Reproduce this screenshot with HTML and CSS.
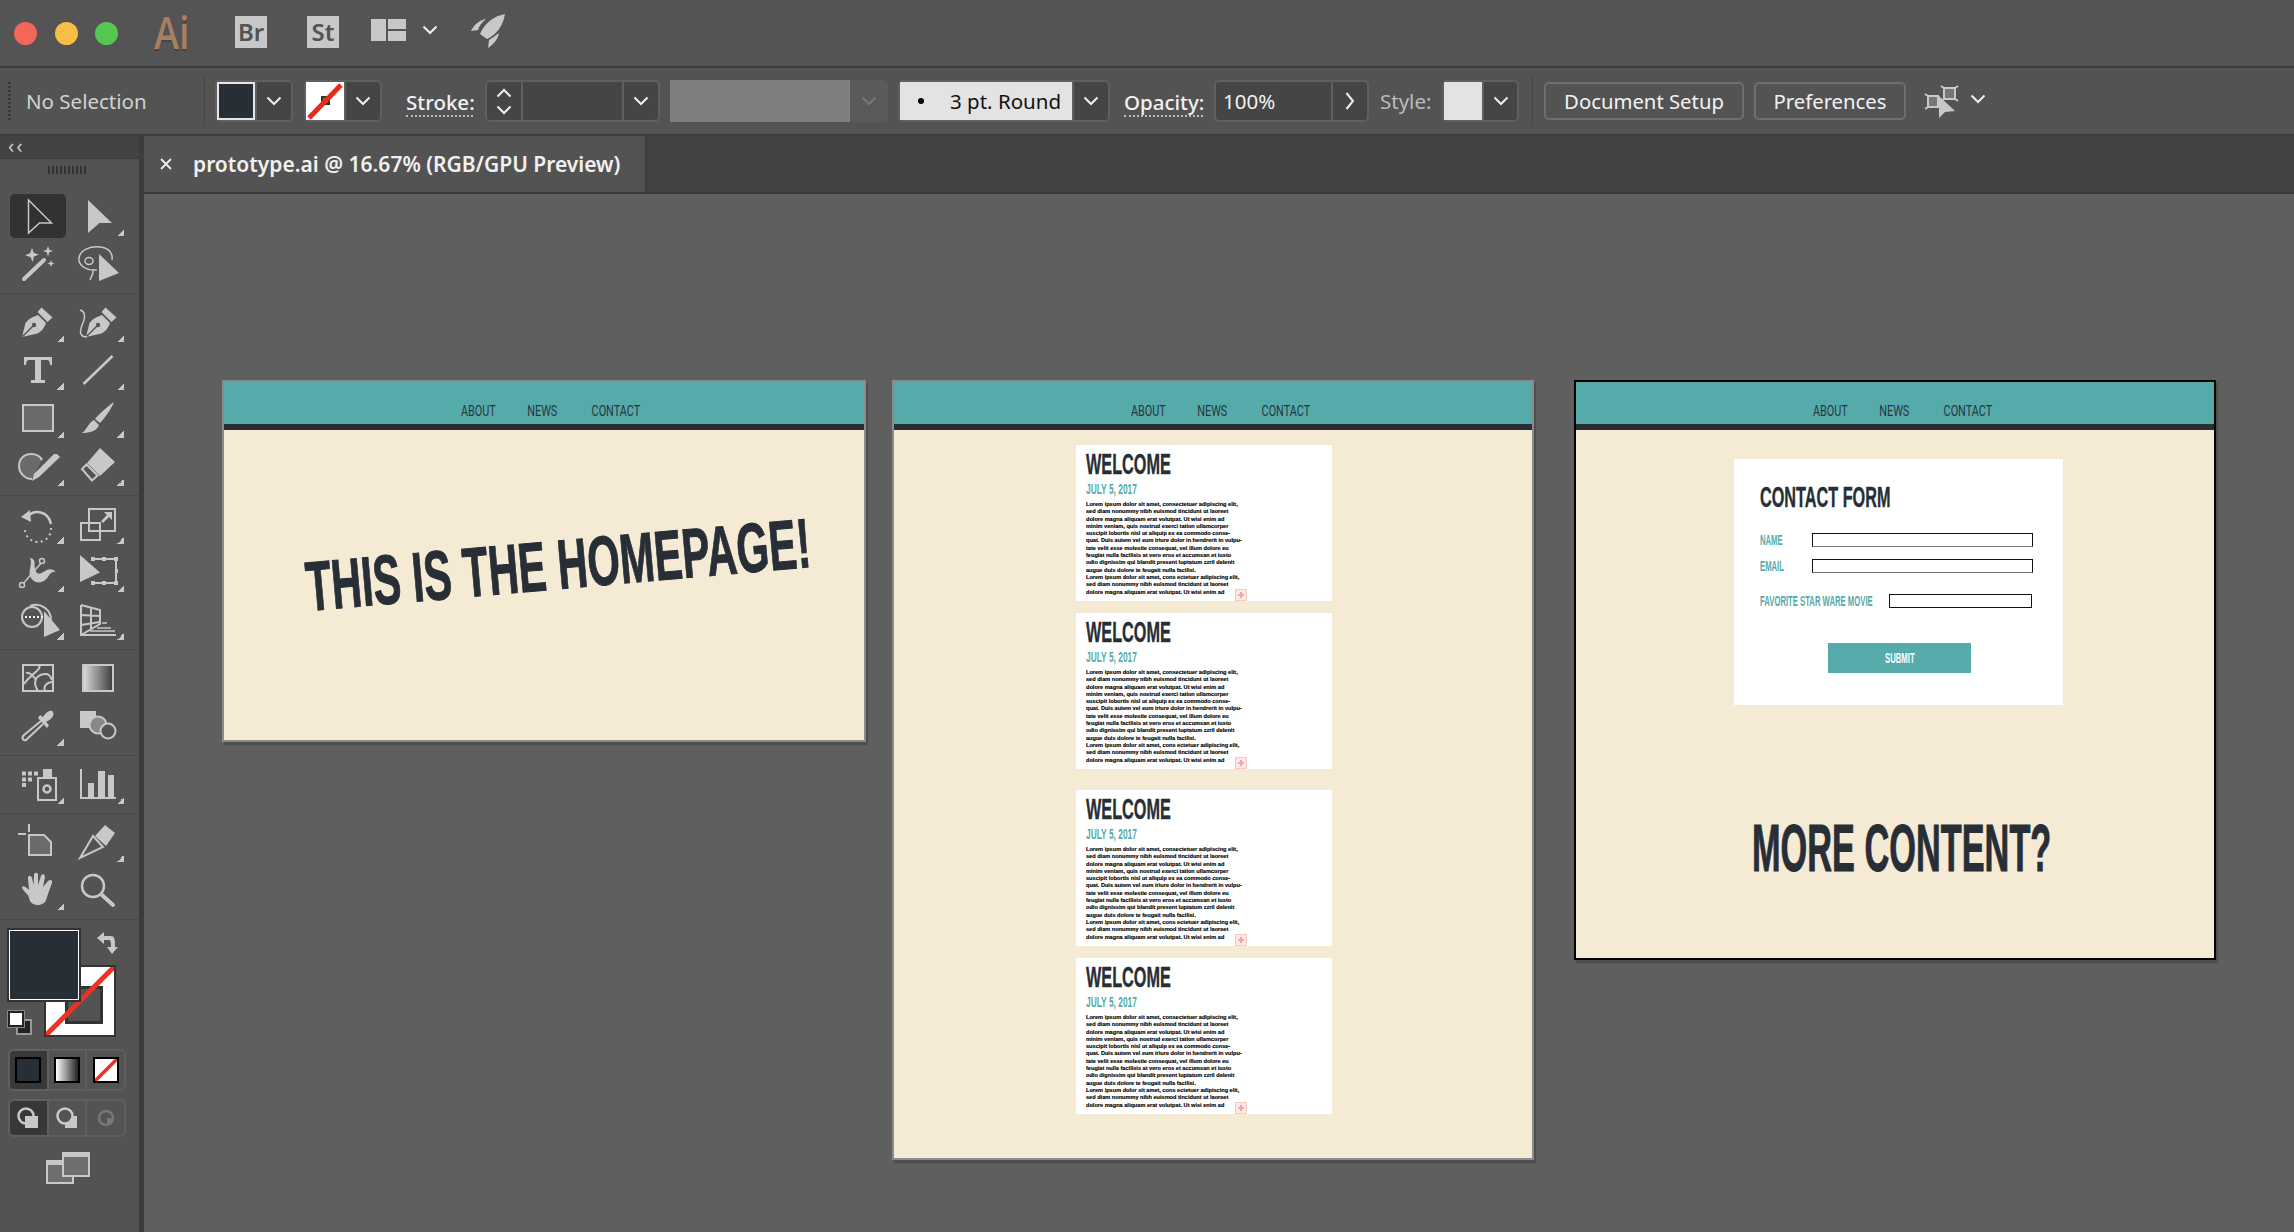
FILE: index.html
```html
<!DOCTYPE html>
<html lang="en">
<head>
    <meta charset="UTF-8">
    <title>prototype.ai @ 16.67% (RGB/GPU Preview)</title>
    <link rel="stylesheet" href="styles.css">
</head>
<body>
    <svg class="sprite" width="0" height="0">
        <symbol id="chev" viewBox="0 0 16 10"><path d="M1.500 1.500 8 8l6.500-6.500" fill="none" stroke="currentColor" stroke-width="2"/></symbol>
        <symbol id="pen" viewBox="0 0 40 40">
            <path d="M4 35 7.500 21C10 17.500 15 14.500 20 13L28 21C26.500 25.500 23 30 19.500 31.500Z"/>
            <path d="M23.500 5.500 34.500 15.500 29.500 20 19.500 10Z"/>
            <path d="M4.500 34.500 15 24" stroke="#535353" stroke-width="1.500"/>
            <circle cx="16" cy="23" r="2.200" fill="#535353"/>
        </symbol>
    </svg>

    <header class="titlebar">
        <span class="light red"></span>
        <span class="light yellow"></span>
        <span class="light green"></span>
        <span class="app-logo">Ai</span>
        <span class="app-tile tile-br">Br</span>
        <span class="app-tile tile-st">St</span>
        <svg class="layout-icon" width="35" height="22" viewBox="0 0 35 22"><path d="M0 0h15v22H0zM17 0h18v10H17zM17 12h18v10H17z" fill="#c8c8c8"/></svg>
        <svg class="chev layout-chev"><use href="#chev"/></svg>
        <svg class="rocket" width="34" height="34" viewBox="0 0 34 34" fill="#c8c8c8">
            <path d="M34 0C24 2 14 8 9 20L16 25C26 20 32 12 34 0Z"/>
            <path d="M15 5C8 6 3 11 0 17L7 16C8 12 11 8 15 5Z"/>
            <path d="M28 19C24 22 21 24 18 26L17 34C23 30 27 25 28 19Z"/>
        </svg>
    </header>

    <div class="controlbar">
        <span class="gripper"></span>
        <span class="ctl-label no-sel">No Selection</span>
        <span class="vdiv div-fill"></span>
        <div class="widget w-fill">
            <span class="swatch swatch-dark"></span>
            <span class="drop"><svg class="chev"><use href="#chev"/></svg></span>
        </div>
        <div class="widget w-stroke">
            <span class="swatch swatch-none">
                <svg width="38" height="38" viewBox="0 0 38 38"><rect x="15" y="14" width="9" height="9" fill="#333"/><rect x="17.500" y="16.500" width="4" height="4" fill="#fff"/><path d="M3 36 35 3" stroke="#e8291c" stroke-width="5"/></svg>
            </span>
            <span class="drop"><svg class="chev"><use href="#chev"/></svg></span>
        </div>
        <span class="ctl-label link stroke-label">Stroke:</span>
        <div class="widget w-weight">
            <span class="stepper">
                <svg class="chev flip"><use href="#chev"/></svg>
                <svg class="chev"><use href="#chev"/></svg>
            </span>
            <span class="well well-weight"></span>
            <span class="drop"><svg class="chev"><use href="#chev"/></svg></span>
        </div>
        <span class="var-field"></span>
        <span class="var-drop"><svg class="chev"><use href="#chev"/></svg></span>
        <div class="widget w-brush">
            <span class="brush-value"><span class="brush-dot"></span>3 pt. Round</span>
            <span class="drop"><svg class="chev"><use href="#chev"/></svg></span>
        </div>
        <span class="ctl-label link opacity-label">Opacity:</span>
        <div class="widget w-opacity">
            <span class="well well-opacity">100%</span>
            <span class="drop"><svg class="chev-right" width="10" height="20" viewBox="0 0 10 20"><path d="M1.500 2 8 10l-6.500 8" fill="none" stroke="#eee" stroke-width="2"/></svg></span>
        </div>
        <span class="ctl-label dim style-label">Style:</span>
        <div class="widget w-style">
            <span class="swatch swatch-light"></span>
            <span class="drop"><svg class="chev"><use href="#chev"/></svg></span>
        </div>
        <span class="vdiv div-buttons"></span>
        <button class="ctl-btn btn-doc">Document Setup</button>
        <button class="ctl-btn btn-prefs">Preferences</button>
        <svg class="arrange-icon" width="36" height="36" viewBox="0 0 36 36">
            <path d="M4 13h10v11H4z" fill="#777" stroke="#c8c8c8" stroke-width="2"/>
            <path d="M20 5h11v11H20z" fill="#777" stroke="#c8c8c8" stroke-width="2"/>
            <path d="M1 11 4 13M1 26 4 24M17 3 20 5M34 3 31 5M34 18 31 16M17 18 20 16" stroke="#c8c8c8" stroke-width="2"/>
            <path d="M15 13V35L21 29 31 28Z" fill="#c8c8c8"/>
        </svg>
        <svg class="chev arrange-chev"><use href="#chev"/></svg>
    </div>

    <div class="workspace">
        <aside class="toolpanel">
            <div class="panel-strip">&lsaquo;&lsaquo;</div>
            <div class="panel-grip"></div>

            <div class="tool-group">
                <div class="tool selected">
                    <svg class="ico" viewBox="0 0 40 40"><path class="line thin" d="M10.500 4V37L21.500 27H33.500Z"/></svg>
                </div>
                <div class="tool more">
                    <svg class="ico" viewBox="0 0 40 40"><path d="M10 4V37L21.500 27H34Z"/></svg>
                </div>
                <div class="tool">
                    <svg class="ico" viewBox="0 0 40 40">
                        <path class="line" style="stroke-width:4" stroke-linecap="round" d="M6 35 26 16"/>
                        <path d="M14 4l1.800 5 5.200 1.500-5 2-1.500 5.500-2-5-5.500-1.800 5-2zM30 2l1.300 3.700 3.700 1.300-3.700 1.300L30 12.500l-1.300-4.200L25 7l3.700-1.300zM33 16l.9 2.600 2.600.9-2.600.9-.9 2.600-.9-2.600-2.600-.9 2.600-.9z"/>
                    </svg>
                </div>
                <div class="tool">
                    <svg class="ico" viewBox="0 0 40 40">
                        <path class="line thin" d="M19 26C8 27 0 21 1 14 2 6 12 2 22 3 31 4 35 9 34 16M15 25C16 31 13 32 12 36M7 17a4 3.500 0 1 0 8 0 4 3.500 0 1 0-8 0"/>
                        <path d="M21 10V37L41 29Z"/>
                    </svg>
                </div>
            </div>

            <div class="tool-group">
                <div class="tool more"><svg class="ico" viewBox="0 0 40 40"><use href="#pen"/></svg></div>
                <div class="tool more">
                    <svg class="ico" viewBox="0 0 40 40">
                        <use href="#pen" x="4"/>
                        <path class="line thin" d="M2 8C7 9 7 14 6 18 4 24 1 28 3 32 4 35 7 35 9 35"/>
                    </svg>
                </div>
                <div class="tool more">
                    <svg class="ico" viewBox="0 0 40 40">
                        <path d="M6 7H34V15H32C32 12 31 10 29 10H23V30H27V33H13V30H17V10H11C9 10 8 12 8 15H6Z"/>
                    </svg>
                </div>
                <div class="tool more"><svg class="ico" viewBox="0 0 40 40"><path class="line" style="stroke-width:2.500" d="M5.500 34 34.500 6"/></svg></div>
                <div class="tool more"><svg class="ico" viewBox="0 0 40 40"><rect class="box" x="5" y="7" width="30" height="26"/></svg></div>
                <div class="tool more">
                    <svg class="ico" viewBox="0 0 40 40">
                        <path d="M36 4C34 10 26 21 22 25L17 21C21 16 31 7 36 4ZM16 22 21 27C19 33 12 35 4 35 8 33 10 25 16 22Z"/>
                    </svg>
                </div>
                <div class="tool more">
                    <svg class="ico" viewBox="0 0 40 40">
                        <path class="box" d="M14 33C7 33 1 27 1 20 1 13 6 8 13 8 18 8 22 10 24 14"/>
                        <path d="M39 8 42 11 21 31 14 35 16 28 36 8Z"/>
                    </svg>
                </div>
                <div class="tool more">
                    <svg class="ico" viewBox="0 0 40 40">
                        <path d="M22 2 37 16 22 30 9 17Z"/>
                        <path class="line" d="M8.500 18.500 4 23 14 34.500 19.500 29.500Z"/>
                    </svg>
                </div>
            </div>

            <div class="tool-group">
                <div class="tool more">
                    <svg class="ico" viewBox="0 0 40 40">
                        <path class="line" style="stroke-width:2.500" d="M10 12C16 6 30 6 33 20"/>
                        <path d="M3 13 12 6 13 18Z"/>
                        <path class="line" style="stroke-dasharray:2 3.500" d="M33 24A13 13 0 0 1 7 26"/>
                    </svg>
                </div>
                <div class="tool more">
                    <svg class="ico" viewBox="0 0 40 40">
                        <path class="line" d="M11 5H37V27H11ZM3 19H22V36H3Z"/>
                        <path d="M34 8V16L31 13 25 19 23 17 29 11 26 8Z"/>
                    </svg>
                </div>
                <div class="tool more">
                    <svg class="ico" viewBox="0 0 40 40">
                        <path d="M12 6C20 7 14 15 19 21 24 25 29 12 38 20 35 19 32 21 30 25 26 31 18 33 13 26 9 20 15 13 12 6Z"/>
                        <path class="line thin" d="M4 33 24 10"/>
                        <circle cx="4" cy="33" r="2.500" fill="#535353" stroke="#c8c8c8" stroke-width="1.500"/>
                        <circle cx="24" cy="9" r="2.500" fill="#535353" stroke="#c8c8c8" stroke-width="1.500"/>
                    </svg>
                </div>
                <div class="tool more">
                    <svg class="ico" viewBox="0 0 40 40">
                        <path d="M2 3V30L22 20.500Z"/>
                        <path class="line" d="M15 7H38V31H15"/>
                        <path d="M13 5h4v4h-4zM24 5h4v4h-4zM36 5h4v4h-4zM37 17h3v4h-3zM36 29h4v4h-4zM24 29h4v4h-4zM13 29h4v4h-4z"/>
                    </svg>
                </div>
                <div class="tool more">
                    <svg class="ico" viewBox="0 0 40 40">
                        <circle class="line" cx="14" cy="17" r="10"/>
                        <path class="line" d="M12 6C22 2 33 9 33 20"/>
                        <path class="line" style="stroke-dasharray:2 2;stroke:#eee" d="M7 17H26"/>
                        <path d="M26 11V37L42 30Z"/>
                    </svg>
                </div>
                <div class="tool more">
                    <svg class="ico" viewBox="0 0 40 40">
                        <path class="line" d="M3 5V35H38M3 5 22 10V24L3 35M3 15 22 16M3 25 22 22M13 8V29"/>
                        <path class="line thin" d="M24 23H29M19 28H33M12 31H37"/>
                    </svg>
                </div>
            </div>

            <div class="tool-group">
                <div class="tool">
                    <svg class="ico" viewBox="0 0 40 40">
                        <rect class="line" x="5" y="7" width="30" height="26"/>
                        <path class="line" d="M6 26C13 16 26 10 20 7M20 33C14 24 18 16 28 16 32 16 33 20 34 22M8 15C12 14 16 19 18 22M27 33C25 28 29 24 35 24"/>
                    </svg>
                </div>
                <div class="tool">
                    <svg class="ico" viewBox="0 0 40 40">
                        <defs><linearGradient id="grad"><stop offset="0" stop-color="#ddd"/><stop offset="1" stop-color="#3c3c3c"/></linearGradient></defs>
                        <rect x="5" y="7" width="30" height="26" fill="url(#grad)" stroke="#c8c8c8" stroke-width="2"/>
                    </svg>
                </div>
                <div class="tool more">
                    <svg class="ico" viewBox="0 0 40 40">
                        <path class="line" d="M23 15 6 29C3 32 5 35 8 34L25 18"/>
                        <path d="M20 12 29 22 31 19 28 16C33 14 37 9 35 6 33 3 28 6 25 11L22 9Z"/>
                    </svg>
                </div>
                <div class="tool">
                    <svg class="ico" viewBox="0 0 40 40">
                        <rect x="2" y="5" width="16" height="17"/>
                        <circle cx="20" cy="19" r="8.500" fill="#888" stroke="#c8c8c8" stroke-width="2"/>
                        <circle cx="30" cy="25" r="7.500" fill="#535353" stroke="#c8c8c8" stroke-width="2"/>
                    </svg>
                </div>
            </div>

            <div class="tool-group">
                <div class="tool more">
                    <svg class="ico" viewBox="0 0 40 40">
                        <path d="M4 7.500h4v4H4zM10 7.500h4v4h-4zM16 7.500h4v4h-4zM4 13.500h4v4H4zM10 13.500h4v4h-4zM4 19h4v4H4zM25 5h9v8h-9z"/>
                        <rect class="line" x="20" y="14" width="18" height="22"/>
                        <circle class="line" style="stroke-width:2.500" cx="29" cy="25" r="3.500"/>
                    </svg>
                </div>
                <div class="tool more">
                    <svg class="ico" viewBox="0 0 40 40">
                        <path class="line" d="M3 5V34H38"/>
                        <path d="M10 19h6v14h-6zM20 7h7v26h-7zM30 11h6v22h-6z"/>
                    </svg>
                </div>
            </div>

            <div class="tool-group">
                <div class="tool">
                    <svg class="ico" viewBox="0 0 40 40">
                        <path class="line" d="M0 12H8M11 2V10"/>
                        <path class="box" d="M11 13H26L33 20V33H11Z"/>
                    </svg>
                </div>
                <div class="tool more">
                    <svg class="ico" viewBox="0 0 40 40">
                        <path class="line" d="M2 36 15 14 25 25Z"/>
                        <path d="M27 3 37 11 28 24 17 14Z"/>
                    </svg>
                </div>
                <div class="tool more">
                    <svg class="ico" viewBox="0 0 40 40">
                        <path d="M10 25C7 22 4 19 4 17 5 15 8 17 11 20L10 8C10 5 13 5 14 8L15.500 15 16 5C16 2 20 2 20 5V15L23 6C24 3 27 4 27 7L25 17 30 11C32 9 35 10 34 13 32 18 30 24 28 30 26 36 15 37 12 31Z"/>
                    </svg>
                </div>
                <div class="tool">
                    <svg class="ico" viewBox="0 0 40 40">
                        <circle class="line" style="stroke-width:2.500" cx="15" cy="16" r="11"/>
                        <path class="line" style="stroke-width:4" stroke-linecap="round" d="M24 25 35 35"/>
                    </svg>
                </div>
            </div>

            <div class="fill-stroke">
                <span class="fs-fill"></span>
                <span class="fs-stroke">
                    <svg width="68" height="68" viewBox="0 0 68 68"><path d="M0 68 68 0" stroke="#ef3124" stroke-width="5"/></svg>
                </span>
                <svg class="fs-swap" width="22" height="24" viewBox="0 0 22 24" fill="#c8c8c8"><path d="M0 7 7 1V5H14C18 5 18 9 18 16H21L15 23 10 16H14C14 12 14 9 12 9H7V13Z"/></svg>
                <span class="fs-default"><span class="def-stroke"></span><span class="def-fill"></span></span>
            </div>

            <div class="mode-row color-row">
                <span class="mode on"><span class="mode-swatch sw-color"></span></span>
                <span class="mode"><span class="mode-swatch sw-grad"></span></span>
                <span class="mode">
                    <span class="mode-swatch sw-none"><svg width="22" height="22" viewBox="0 0 22 22"><path d="M0 22 22 0" stroke="#ef3124" stroke-width="3.500"/></svg></span>
                </span>
            </div>
            <div class="mode-row draw-row">
                <span class="mode on"><svg width="24" height="24" viewBox="0 0 24 24"><circle cx="10" cy="10" r="7.500" fill="none" stroke="#c8c8c8" stroke-width="2.500"/><rect x="9" y="10" width="13" height="12" fill="#c8c8c8"/></svg></span>
                <span class="mode"><svg width="24" height="24" viewBox="0 0 24 24"><circle cx="10" cy="10" r="7.500" fill="#535353" stroke="#c8c8c8" stroke-width="2.500"/><path d="M10 22H22V10H17C17 14 14 17 10 18Z" fill="#c8c8c8"/></svg></span>
                <span class="mode faded"><svg width="24" height="24" viewBox="0 0 24 24"><circle cx="12" cy="12" r="7" fill="none" stroke="#777" stroke-width="2.500"/><path d="M13 12H19V14C18 17 16 18 13 19Z" fill="#777"/></svg></span>
            </div>
            <svg class="screen-mode" width="44" height="32" viewBox="0 0 44 32">
                <rect x="1" y="9" width="26" height="22" fill="#6e6e6e" stroke="#c8c8c8" stroke-width="2"/>
                <path d="M0 8h28v5H0z" fill="#c8c8c8"/>
                <rect x="17" y="1" width="26" height="23" fill="#6e6e6e" stroke="#c8c8c8" stroke-width="2"/>
                <path d="M16 0h28v5H16z" fill="#c8c8c8"/>
            </svg>
        </aside>

        <main class="docarea">
            <div class="tabbar">
                <div class="doc-tab">
                    <svg class="tab-close" width="14" height="14" viewBox="0 0 14 14"><path d="M2 2 12 12M12 2 2 12" stroke="#eee" stroke-width="1.800"/></svg>
                    <span class="tab-title">prototype.ai @ 16.67% (RGB/GPU Preview)</span>
                </div>
            </div>
            <div class="canvas">
                <section class="artboard board-home">
                    <div class="site-head"><nav class="site-nav"><span>ABOUT</span><span>NEWS</span><span>CONTACT</span></nav></div>
                    <div class="home-body"><h1 class="home-title">THIS IS THE HOMEPAGE!</h1></div>
                </section>

                <section class="artboard board-news">
                    <div class="site-head"><nav class="site-nav"><span>ABOUT</span><span>NEWS</span><span>CONTACT</span></nav></div>
                    <div class="news-list">
                        <article class="card">
                            <h2 class="bebas card-title">WELCOME</h2>
                            <p class="bebas card-date">JULY 5, 2017</p>
                            <p class="card-text">Lorem ipsum dolor sit amet, consectetuer adipiscing elit,<br>sed diam nonummy nibh euismod tincidunt ut laoreet<br>dolore magna aliquam erat volutpat. Ut wisi enim ad<br>minim veniam, quis nostrud exerci tation ullamcorper<br>suscipit lobortis nisl ut aliquip ex ea commodo conse-<br>quat. Duis autem vel eum iriure dolor in hendrerit in vulpu-<br>tate velit esse molestie consequat, vel illum dolore eu<br>feugiat nulla facilisis at vero eros et accumsan et iusto<br>odio dignissim qui blandit present luptatum zzril delenit<br>augue duis dolore te feugait nulla facilisi.<br>Lorem ipsum dolor sit amet, cons ectetuer adipiscing elit,<br>sed diam nonummy nibh euismod tincidunt ut laoreet<br>dolore magna aliquam erat volutpat. Ut wisi enim ad</p>
                            <span class="overset"></span>
                        </article>
                        <article class="card">
                            <h2 class="bebas card-title">WELCOME</h2>
                            <p class="bebas card-date">JULY 5, 2017</p>
                            <p class="card-text">Lorem ipsum dolor sit amet, consectetuer adipiscing elit,<br>sed diam nonummy nibh euismod tincidunt ut laoreet<br>dolore magna aliquam erat volutpat. Ut wisi enim ad<br>minim veniam, quis nostrud exerci tation ullamcorper<br>suscipit lobortis nisl ut aliquip ex ea commodo conse-<br>quat. Duis autem vel eum iriure dolor in hendrerit in vulpu-<br>tate velit esse molestie consequat, vel illum dolore eu<br>feugiat nulla facilisis at vero eros et accumsan et iusto<br>odio dignissim qui blandit present luptatum zzril delenit<br>augue duis dolore te feugait nulla facilisi.<br>Lorem ipsum dolor sit amet, cons ectetuer adipiscing elit,<br>sed diam nonummy nibh euismod tincidunt ut laoreet<br>dolore magna aliquam erat volutpat. Ut wisi enim ad</p>
                            <span class="overset"></span>
                        </article>
                        <article class="card card-apart">
                            <h2 class="bebas card-title">WELCOME</h2>
                            <p class="bebas card-date">JULY 5, 2017</p>
                            <p class="card-text">Lorem ipsum dolor sit amet, consectetuer adipiscing elit,<br>sed diam nonummy nibh euismod tincidunt ut laoreet<br>dolore magna aliquam erat volutpat. Ut wisi enim ad<br>minim veniam, quis nostrud exerci tation ullamcorper<br>suscipit lobortis nisl ut aliquip ex ea commodo conse-<br>quat. Duis autem vel eum iriure dolor in hendrerit in vulpu-<br>tate velit esse molestie consequat, vel illum dolore eu<br>feugiat nulla facilisis at vero eros et accumsan et iusto<br>odio dignissim qui blandit present luptatum zzril delenit<br>augue duis dolore te feugait nulla facilisi.<br>Lorem ipsum dolor sit amet, cons ectetuer adipiscing elit,<br>sed diam nonummy nibh euismod tincidunt ut laoreet<br>dolore magna aliquam erat volutpat. Ut wisi enim ad</p>
                            <span class="overset"></span>
                        </article>
                        <article class="card">
                            <h2 class="bebas card-title">WELCOME</h2>
                            <p class="bebas card-date">JULY 5, 2017</p>
                            <p class="card-text">Lorem ipsum dolor sit amet, consectetuer adipiscing elit,<br>sed diam nonummy nibh euismod tincidunt ut laoreet<br>dolore magna aliquam erat volutpat. Ut wisi enim ad<br>minim veniam, quis nostrud exerci tation ullamcorper<br>suscipit lobortis nisl ut aliquip ex ea commodo conse-<br>quat. Duis autem vel eum iriure dolor in hendrerit in vulpu-<br>tate velit esse molestie consequat, vel illum dolore eu<br>feugiat nulla facilisis at vero eros et accumsan et iusto<br>odio dignissim qui blandit present luptatum zzril delenit<br>augue duis dolore te feugait nulla facilisi.<br>Lorem ipsum dolor sit amet, cons ectetuer adipiscing elit,<br>sed diam nonummy nibh euismod tincidunt ut laoreet<br>dolore magna aliquam erat volutpat. Ut wisi enim ad</p>
                            <span class="overset"></span>
                        </article>
                    </div>
                </section>

                <section class="artboard board-contact">
                    <div class="site-head"><nav class="site-nav"><span>ABOUT</span><span>NEWS</span><span>CONTACT</span></nav></div>
                    <form class="contact-card">
                        <h2 class="bebas card-title">CONTACT FORM</h2>
                        <div class="field field-name"><label class="bebas field-label">NAME</label><span class="field-box"></span></div>
                        <div class="field field-email"><label class="bebas field-label">EMAIL</label><span class="field-box"></span></div>
                        <div class="field field-movie"><label class="bebas field-label">FAVORITE STAR WARE MOVIE</label><span class="field-box box-short"></span></div>
                        <div class="submit-btn"><span class="bebas submit-text">SUBMIT</span></div>
                    </form>
                    <h2 class="bebas more-title">MORE CONTENT?</h2>
                </section>
            </div>
        </main>
    </div>
</body>
</html>
```

FILE: styles.css
```css
* {
    box-sizing: border-box;
}

html, body {
    margin: 0;
    padding: 0;
}

body {
    width: 2294px;
    height: 1232px;
    overflow: hidden;
    background-color: #535353;
    font-family: "Noto Sans", Arial, sans-serif;
    font-size: 20px;
    color: #e6e6e6;
    display: flex;
    flex-direction: column;
}

.sprite {
    position: absolute;
}

.chev {
    width: 16px;
    height: 10px;
    color: #eee;
    display: block;
    flex: none;
}

.flip {
    transform: scaleY(-1);
}

/* title bar */
.titlebar {
    height: 68px;
    flex: none;
    border-bottom: 2px solid #3c3c3c;
    background-color: #545454;
    display: flex;
    align-items: center;
    padding-left: 14px;
}

.light {
    width: 23px;
    height: 23px;
    border-radius: 50%;
    margin-right: 17.5px;
    flex: none;
}

.red { background-color: #f2665c; }
.yellow { background-color: #f8bd45; }
.green { background-color: #55c64f; }

.app-logo {
    font-family: "Open Sans", sans-serif;
    font-size: 46px;
    font-weight: 600;
    line-height: 46px;
    color: #a87f62;
    width: 48px;
    margin-left: 18.5px;
    margin-top: -4px;
    transform: scaleX(.82);
    transform-origin: left center;
    text-shadow: 0 2px 0 #444;
}

.app-tile {
    width: 32px;
    height: 32px;
    margin-top: -2px;
    background-color: #c8c8c8;
    color: #535353;
    font-size: 24px;
    font-weight: 600;
    line-height: 32px;
    text-align: center;
    flex: none;
}

.tile-br { margin-left: 33px; }
.tile-st { margin-left: 40px; }
.layout-icon { margin-left: 32px; margin-top: -6px; }
.layout-chev { margin-left: 16px; margin-top: -6px; }
.rocket { margin-left: 33px; margin-top: -4px; }

/* control bar */
.controlbar {
    height: 68px;
    flex: none;
    border-bottom: 2px solid #3c3c3c;
    display: flex;
    align-items: center;
    padding-left: 8px;
    background-color: #535353;
}

.gripper {
    width: 3px;
    height: 38px;
    flex: none;
    background-image: linear-gradient(#3a3a3a 50%, transparent 50%);
    background-size: 3px 4px;
}

.ctl-label {
    flex: none;
    white-space: nowrap;
    font-size: 20.5px;
}

.no-sel { margin-left: 15px; width: 178px; color: #d2d2d2; }
.link {
    color: #f2f2f2;
    font-weight: 500;
    line-height: 26px;
    border-bottom: 2px dotted #bbb;
    margin-top: 3px;
}
.dim { color: #bbb; }
.stroke-label { margin-left: 24px; width: 67px; }
.opacity-label { margin-left: 14px; width: 79px; }
.style-label { margin-left: 11px; width: 51px; }

.vdiv {
    width: 1px;
    height: 50px;
    background-color: #474747;
    flex: none;
}

.div-fill { margin-right: 10px; }
.div-buttons { margin-left: 13px; margin-right: 11px; }

.widget {
    height: 42px;
    flex: none;
    display: flex;
    align-items: stretch;
    border: 2px solid #5f5f5f;
    border-radius: 5px;
    background-color: #454545;
}

.drop {
    width: 36px;
    flex: none;
    display: flex;
    align-items: center;
    justify-content: center;
    border-left: 2px solid #5f5f5f;
}

.swatch {
    width: 38px;
    flex: none;
    display: block;
}

.w-fill { width: 78px; }
.w-stroke { width: 78px; margin-left: 11px; }
.w-weight { width: 175px; margin-left: 12px; }
.w-brush { width: 212px; margin-left: 10px; }
.w-opacity { width: 155px; margin-left: 11px; }
.w-style { width: 77px; margin-left: 11px; }

.swatch-dark { background-color: #272e36; border: 2px solid #e6e6e6; }
.swatch-none { background-color: #fff; }
.swatch-none svg { display: block; }
.swatch-light { background-color: #e3e3e3; }

.stepper {
    width: 34px;
    flex: none;
    display: flex;
    flex-direction: column;
    justify-content: space-around;
    align-items: center;
    padding: 2px 0;
}

.well { display: block; flex: 1; }
.well-weight { border-left: 2px solid #5f5f5f; }
.well-opacity { padding-left: 7px; color: #f2f2f2; font-size: 20.5px; line-height: 38px; }

.var-field {
    width: 180px;
    height: 42px;
    margin-left: 10px;
    background-color: #7f7f7f;
    flex: none;
}

.var-drop {
    width: 38px;
    height: 42px;
    flex: none;
    background-color: #5a5a5a;
    display: flex;
    align-items: center;
    justify-content: center;
    border-radius: 0 5px 5px 0;
}

.var-drop .chev { color: #777; }

.brush-value {
    width: 172px;
    flex: none;
    background-color: #e3e3e3;
    color: #111;
    font-size: 20.5px;
    line-height: 38px;
    white-space: nowrap;
    display: flex;
    align-items: center;
    padding-left: 18px;
}

.brush-dot {
    width: 6px;
    height: 6px;
    border-radius: 50%;
    background-color: #000;
    margin-right: 26px;
    flex: none;
}

.ctl-btn {
    height: 38px;
    flex: none;
    font: inherit;
    font-size: 20.3px;
    color: #f2f2f2;
    background-color: #535353;
    border: 2px solid #6e6e6e;
    border-radius: 5px;
    padding: 0;
}

.btn-doc { width: 200px; }
.btn-prefs { width: 152px; margin-left: 10px; }
.arrange-icon { margin-left: 18px; flex: none; }
.arrange-chev { margin-left: 10px; margin-top: -4px; }

/* workspace */
.workspace {
    flex: 1;
    display: flex;
    min-height: 0;
}

.toolpanel {
    width: 144px;
    flex: none;
    background-color: #535353;
    border-right: 5px solid #3c3c3c;
}

.panel-strip {
    height: 23px;
    background-color: #434343;
    border-bottom: 1px solid #3c3c3c;
    color: #ccc;
    font-size: 20px;
    line-height: 19px;
    letter-spacing: 2px;
    padding-left: 8px;
}

.panel-grip {
    width: 38px;
    height: 8px;
    margin: 7px 0 18px 48px;
    background-image: linear-gradient(90deg, #333 50%, transparent 50%);
    background-size: 4px 8px;
}

.tool-group {
    display: grid;
    grid-template-columns: 60px 60px;
    grid-auto-rows: 48px;
    padding: 0 0 5px 8px;
    border-bottom: 1px solid #484848;
    margin-bottom: 4px;
}

.tool {
    position: relative;
    display: flex;
    align-items: center;
    justify-content: center;
}

.tool.selected {
    background-color: #323232;
    border-radius: 5px;
    margin: 2px;
}

.tool.more::after {
    content: "";
    position: absolute;
    right: 4px;
    bottom: 4px;
    width: 7px;
    height: 7px;
    background: linear-gradient(135deg, transparent 50%, #c8c8c8 50%);
}

.ico {
    width: 40px;
    height: 40px;
    fill: #c8c8c8;
    overflow: visible;
}

.ico .line {
    fill: none;
    stroke: #c8c8c8;
    stroke-width: 2;
}

.ico .thin {
    stroke-width: 1.5;
}

.ico .box {
    fill: #6b6b6b;
    stroke: #c8c8c8;
    stroke-width: 2;
}

/* fill and stroke */
.fill-stroke {
    position: relative;
    height: 126px;
    margin-top: 5px;
}

.fs-fill {
    position: absolute;
    left: 8px;
    top: 4px;
    width: 72px;
    height: 72px;
    background-color: #272e36;
    border: 2px solid #fff;
    outline: 2px solid #333;
    outline-offset: -1px;
    z-index: 2;
}

.fs-stroke {
    position: absolute;
    left: 44px;
    top: 40px;
    width: 72px;
    height: 72px;
    background-color: #fff;
    border: 2px solid #333;
}

.fs-stroke::before {
    content: "";
    position: absolute;
    left: 19px;
    top: 19px;
    width: 32px;
    height: 32px;
    background-color: #535353;
    border: 3px solid #333;
}

.fs-stroke svg {
    position: absolute;
    left: 0;
    top: 0;
}

.fs-swap {
    position: absolute;
    left: 97px;
    top: 6px;
}

.fs-default {
    position: absolute;
    left: 8px;
    top: 86px;
    width: 24px;
    height: 24px;
}

.def-stroke {
    position: absolute;
    left: 8px;
    top: 8px;
    width: 16px;
    height: 16px;
    background-color: #222;
    border: 2px solid #999;
}

.def-fill {
    position: absolute;
    left: 0;
    top: 0;
    width: 16px;
    height: 16px;
    background-color: #fff;
    border: 2px solid #222;
    outline: 1px solid #888;
}

.mode-row {
    display: flex;
    width: 118px;
    margin-left: 8px;
    border: 2px solid #5f5f5f;
    border-radius: 6px;
    overflow: hidden;
}

.color-row { height: 42px; margin-top: -2px; }
.draw-row { height: 38px; margin-top: 8px; }

.mode {
    flex: 1;
    display: flex;
    align-items: center;
    justify-content: center;
    border-left: 2px solid #5f5f5f;
}

.mode:first-child { border-left: 0; }
.mode.on { background-color: #383838; }

.mode-swatch {
    width: 26px;
    height: 26px;
    border: 2px solid #000;
    display: block;
}

.sw-color { background-color: #272e36; }
.sw-grad { background: linear-gradient(90deg, #fff, #222); }
.sw-none { background-color: #fff; }
.sw-none svg { display: block; }

.screen-mode {
    display: block;
    margin: 15px 0 0 46px;
}

/* document area */
.docarea {
    flex: 1;
    min-width: 0;
    display: flex;
    flex-direction: column;
}

.tabbar {
    height: 58px;
    flex: none;
    background-color: #434343;
    border-bottom: 2px solid #3a3a3a;
}

.doc-tab {
    width: 503px;
    height: 56px;
    background-color: #535353;
    border-right: 2px solid #3a3a3a;
    display: flex;
    align-items: center;
    padding-left: 15px;
}

.tab-title {
    margin-left: 20px;
    font-size: 21px;
    font-weight: 600;
    color: #f0f0f0;
    white-space: nowrap;
}

.canvas {
    position: relative;
    flex: 1;
    background-color: #5f5f5f;
}

/* artboards sit on a free canvas */
.artboard {
    position: absolute;
    top: 186px;
    background-color: #f5ead4;
    border: 2px solid #8b8b8b;
    box-shadow: 2px 3px 1px #4e4e4e;
    overflow: hidden;
}

.board-home { left: 78px; width: 644px; height: 362px; }
.board-news { left: 748px; width: 642px; height: 780px; }
.board-contact { left: 1430px; width: 642px; height: 580px; border-color: #000; }

.site-head {
    height: 48px;
    background-color: #55abaa;
    border-bottom: 6px solid #272e36;
    padding: 21px 0 0 237px;
}

.site-nav {
    display: flex;
    gap: 45px;
    font-family: Roboto, sans-serif;
    font-size: 15.5px;
    line-height: 16px;
    color: #27363c;
    white-space: nowrap;
    transform: scaleX(.7);
    transform-origin: left center;
}

.site-nav span:last-child {
    margin-left: 4px;
}

.bebas {
    font-family: "Liberation Sans", Arial, sans-serif;
    font-weight: 700;
    white-space: nowrap;
    transform-origin: left center;
    margin: 0;
}

.home-body {
    height: 310px;
    display: flex;
    align-items: center;
    justify-content: center;
    padding: 0 0 40px 28px;
}

.home-title {
    margin: 0;
    flex: none;
    font-family: "Liberation Sans", Arial, sans-serif;
    font-size: 70px;
    line-height: 70px;
    font-weight: 700;
    color: #272e36;
    white-space: nowrap;
    -webkit-text-stroke: 1px #272e36;
    transform: rotate(-5deg) scaleX(.595);
}

.news-list {
    margin-left: 182px;
    padding-top: 15px;
    width: 256px;
}

.card {
    position: relative;
    height: 156px;
    background-color: #fff;
    padding: 9px 0 0 10px;
    margin-bottom: 12px;
}

.card-apart {
    margin-top: 21px;
}

.card-title {
    font-size: 29px;
    line-height: 21px;
    color: #272e36;
    -webkit-text-stroke: .4px #272e36;
    transform: scaleX(.56);
}

.card-date {
    font-size: 14px;
    line-height: 10px;
    margin-top: 9px;
    color: #55abaa;
    transform: scaleX(.6);
}

.card-text {
    margin: 7px 0 0;
    font-family: "Liberation Sans", Arial, sans-serif;
    font-weight: 700;
    font-size: 5.6px;
    line-height: 7.3px;
    color: #000;
    -webkit-text-stroke: .15px #000;
    white-space: nowrap;
}

.overset {
    position: absolute;
    left: 159px;
    bottom: 0;
    width: 12px;
    height: 12px;
    border: 1px solid #f6c9c9;
    background:
        linear-gradient(#f3a6a6, #f3a6a6) center / 6px 2px no-repeat,
        linear-gradient(#f3a6a6, #f3a6a6) center / 2px 6px no-repeat,
        #fde8e8;
}

.contact-card {
    display: block;
    width: 329px;
    height: 246px;
    margin: 29px 0 0 158px;
    padding: 28px 0 0 26px;
    background-color: #fff;
}

.field {
    display: flex;
    align-items: center;
    height: 14px;
}

.field-name { margin-top: 25px; }
.field-email { margin-top: 12px; }
.field-movie { margin-top: 21px; }

.field-label {
    font-size: 14px;
    line-height: 10px;
    color: #55abaa;
    transform: scaleX(.55);
}

.field-name .field-label,
.field-email .field-label {
    width: 52px;
}

.field-movie .field-label {
    width: 129px;
}

.field-box {
    display: block;
    flex: none;
    height: 14px;
    width: 221px;
    background-color: #fff;
    border: 1px solid #111;
    border-bottom-color: #777;
    border-right-width: 1.5px;
}

.box-short {
    width: 143px;
    border-bottom-color: #111;
}

.submit-btn {
    width: 143px;
    height: 30px;
    margin: 35px 0 0 68px;
    background-color: #55abaa;
    display: flex;
    align-items: center;
    justify-content: center;
}

.submit-text {
    font-size: 14px;
    line-height: 10px;
    color: #fff;
    transform: scaleX(.55);
    transform-origin: center;
}

.more-title {
    margin: 119px 0 0 176px;
    font-size: 66px;
    line-height: 48px;
    color: #272e36;
    -webkit-text-stroke: 1px #272e36;
    transform: scaleX(.52);
}
```
